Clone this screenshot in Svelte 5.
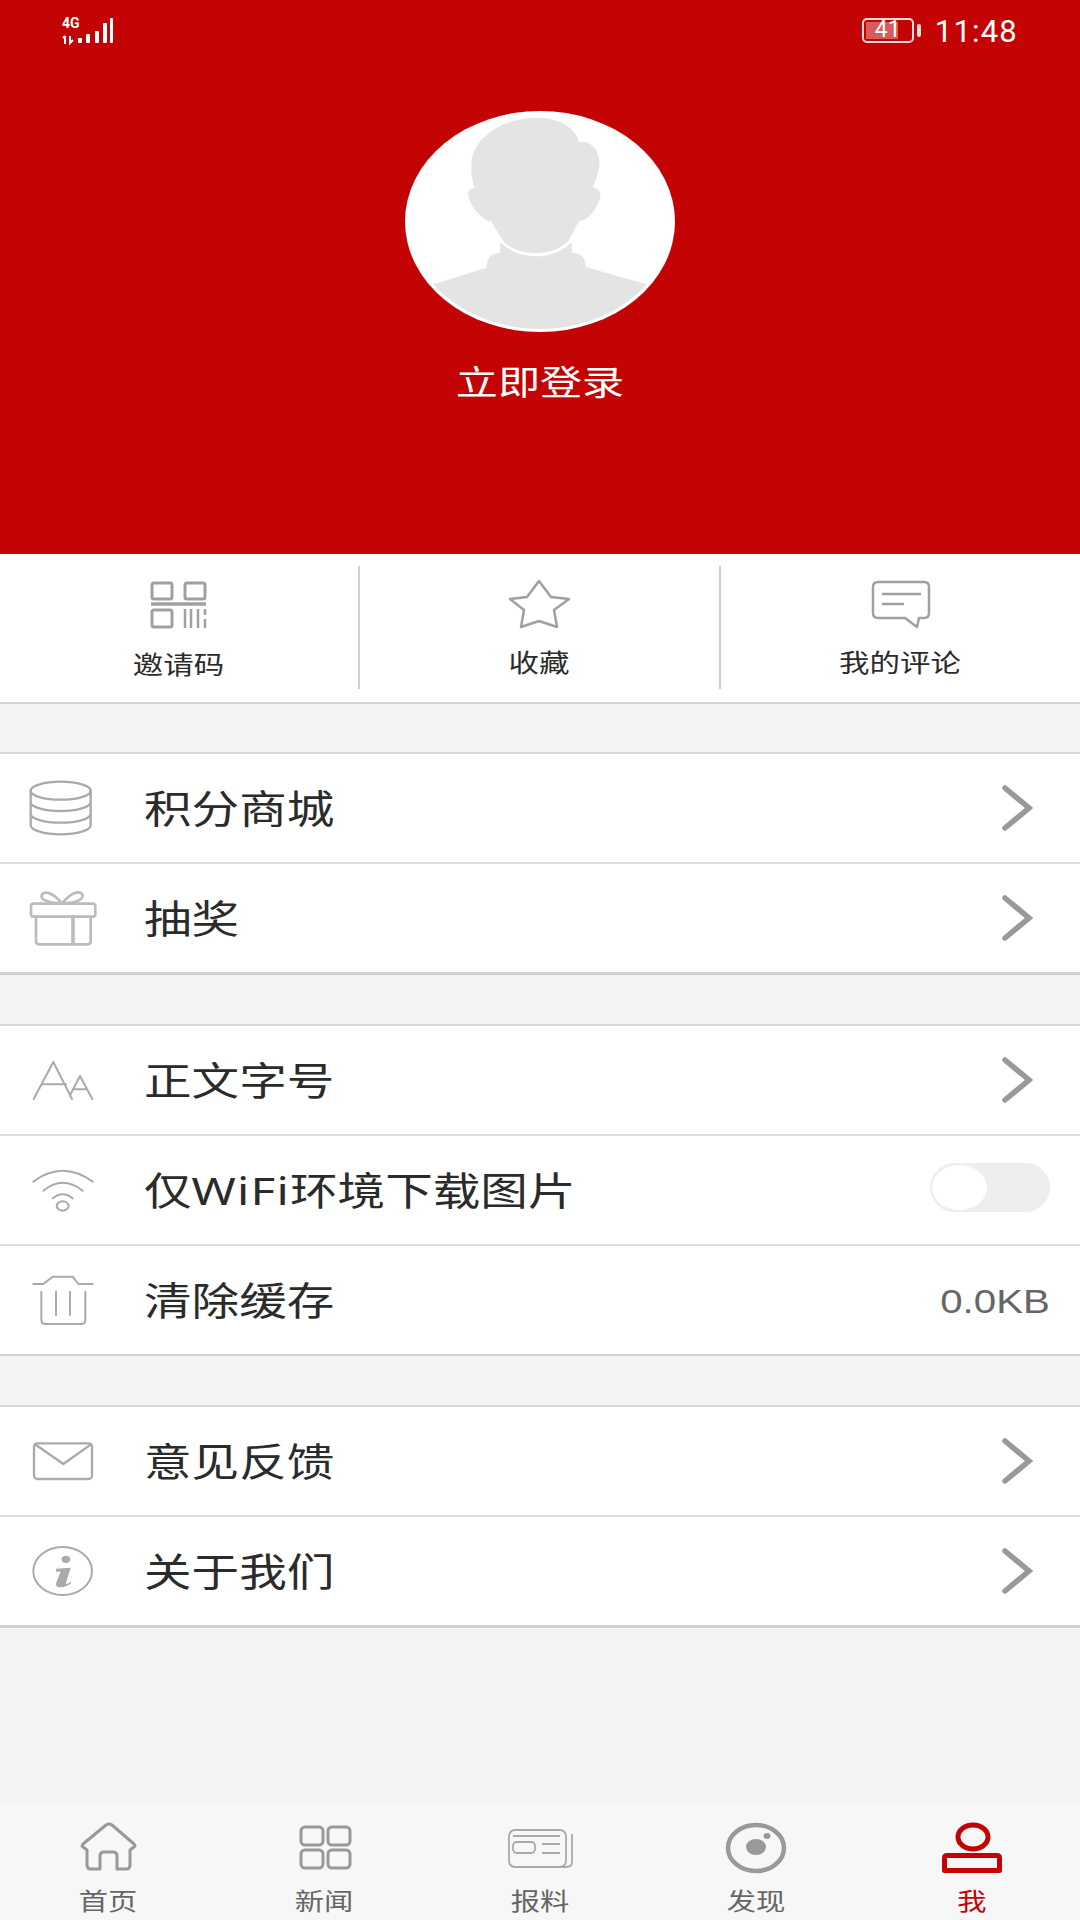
<script>
  const bottomTabs = ['首页', '新闻', '报料', '发现', '我']
</script>

{#snippet chevron()}
  <svg class="chevron" width="34" height="46" viewBox="0 0 34 46"><path d="M5 3 L29 23 L5 43" /></svg>
{/snippet}

<div class="page">
  <header class="header">
    <div class="status">
      <svg class="signal" width="60" height="30" viewBox="0 0 60 30">
        <text x="0" y="12" class="net">4G</text>
        <path class="arrows" d="M3 20 V28 M1 22 L3 20 M8 20 V27 L11 24" />
        <g class="bars">
          <rect x="16" y="22" width="4" height="5" rx="1" />
          <rect x="24" y="18" width="4" height="9" rx="1" />
          <rect x="33" y="15" width="4" height="12" rx="1" />
          <rect x="41" y="7" width="4" height="20" rx="1" />
          <rect x="48" y="2" width="3" height="25" rx="1" />
        </g>
      </svg>
      <div class="status-right">
        <div class="battery"><div class="battery-fill"></div><span>41</span></div>
        <div class="battery-nub"></div>
        <span class="time">11:48</span>
      </div>
    </div>

    <svg class="avatar" width="270" height="221" viewBox="75 62 810 663" preserveAspectRatio="none">
      <defs>
        <clipPath id="avatar-clip"><ellipse cx="480" cy="392" rx="396" ry="324" /></clipPath>
      </defs>
      <ellipse cx="480" cy="393.500" rx="405" ry="331.500" fill="#fff" />
      <g clip-path="url(#avatar-clip)" fill="#e4e4e4">
        <path d="M470 82 C540 82 590 115 596 155 C640 150 662 190 658 225 C655 255 645 275 638 292 C655 292 665 305 660 325 C650 355 625 390 598 393 C585 410 575 440 565 452 C540 478 505 488 470 488 C435 488 400 480 372 455 C360 440 345 410 333 393 C305 390 275 350 265 320 C262 300 272 292 284 295 C275 265 272 240 275 215 C280 140 370 82 470 82 Z" />
        <path d="M160 582 L320 532 C320 500 335 490 360 487 L360 455 C385 482 430 498 470 498 C510 498 550 482 575 455 L575 487 C600 487 617 500 617 530 L800 582 L800 730 L160 730 Z" />
      </g>
    </svg>
    <div class="login"><span class="wide">立即登录</span></div>
  </header>

  <nav class="shortcuts">
    <div class="shortcut">
      <svg width="80" height="52" viewBox="0 0 80 52">
        <rect x="13" y="4" width="20" height="16" rx="2" stroke-width="3" />
        <rect x="46" y="4" width="20" height="16" rx="2" stroke-width="3" />
        <path d="M12 25 H67" stroke-width="3.500" />
        <rect x="13" y="31" width="20" height="17" rx="2" stroke-width="3" />
        <path d="M46 30 V49 M52 30 V49 M59 30 V49 M66 30 V36 M66 40 V49" />
      </svg>
      <span class="wide first-label">邀请码</span>
    </div>
    <div class="shortcut">
      <svg width="80" height="52" viewBox="0 0 80 52">
        <path d="M39 2 L51 18 L69 20 L54 31 L57 48 L39 42 L21 48 L24 31 L10 20 L27 18 Z" />
      </svg>
      <span class="wide">收藏</span>
    </div>
    <div class="shortcut">
      <svg width="80" height="52" viewBox="0 0 80 52">
        <path d="M17 3 H63 Q68 3 68 8 V34 Q68 39 63 39 H58 L56 48 L44 39 H17 Q12 39 12 34 V8 Q12 3 17 3 Z" />
        <path d="M21 15 H60 M21 25 H43" />
      </svg>
      <span class="wide">我的评论</span>
    </div>
  </nav>

  <section class="group first">
    <div class="row">
      <svg class="row-icon" width="120" height="108" viewBox="0 42 360 324">
        <ellipse cx="182" cy="152" rx="90" ry="27" />
        <path d="M92 152 V256 A90 27 0 0 0 272 256 V152 M92 186 A90 27 0 0 0 272 186 M92 221 A90 27 0 0 0 272 221" />
      </svg>
      <span class="label wide">积分商城</span>
      {@render chevron()}
    </div>
    <div class="row">
      <svg class="row-icon light" width="120" height="108" viewBox="0 372 360 324">
        <rect x="93" y="491" width="193" height="39" rx="8" />
        <path d="M108 530 V604 Q108 613 117 613 H263 Q272 613 272 604 V530" />
        <path d="M219 530 V612" stroke-width="11" />
        <path d="M186 490 C160 460 135 450 125 465 C120 480 150 490 186 490 C215 455 240 450 248 465 C250 480 225 490 186 490" />
      </svg>
      <span class="label wide">抽奖</span>
      {@render chevron()}
    </div>
  </section>

  <section class="group">
    <div class="row">
      <svg class="row-icon thin" width="120" height="108" viewBox="0 18 360 324">
        <path d="M101 237 L160 126 L216 237 M125 193 H198 M210 226 L240 168 L277 237 M218 208 H262" />
      </svg>
      <span class="label wide">正文字号</span>
      {@render chevron()}
    </div>
    <div class="row">
      <svg class="row-icon thin" width="120" height="108" viewBox="0 348 360 324">
        <path d="M100 485 Q188 420 278 485 M130 512 Q188 465 248 512 M158 535 Q188 510 218 535" />
        <ellipse cx="188" cy="558" rx="18" ry="14" />
      </svg>
      <span class="label wide">仅<span class="latin">WiFi</span>环境下载图片</span>
      <div class="toggle"><div class="thumb"></div></div>
    </div>
    <div class="row">
      <svg class="row-icon thin" width="120" height="108" viewBox="0 678 360 324">
        <path d="M100 792 H130 L158 770 H218 L235 792 H278" />
        <path d="M124 815 V900 Q124 912 136 912 H244 Q256 912 256 900 V815 M168 815 V885 M210 815 V885" />
      </svg>
      <span class="label wide">清除缓存</span>
      <span class="size">0.0KB</span>
    </div>
  </section>

  <section class="group last">
    <div class="row">
      <svg class="row-icon" width="120" height="108" viewBox="0 21 360 324">
        <rect x="102" y="130" width="174" height="107" rx="10" />
        <path d="M105 133 L190 192 L273 133" />
      </svg>
      <span class="label wide">意见反馈</span>
      {@render chevron()}
    </div>
    <div class="row">
      <svg class="row-icon thin" width="120" height="108" viewBox="0 351 360 324">
        <ellipse cx="188" cy="513" rx="88" ry="72" />
        <ellipse class="solid" cx="198" cy="478" rx="13" ry="11" />
        <path class="solid" d="M168 506 L212 503 L198 548 Q196 556 212 546 L214 550 Q190 566 172 560 Q165 555 170 545 L182 515 L168 515 Z" />
      </svg>
      <span class="label wide">关于我们</span>
      {@render chevron()}
    </div>
  </section>

  <div class="spacer"></div>

  <footer class="tabbar">
    {#each bottomTabs as name, i}
      <div class="tab" class:active={i === 4}>
        <svg width="80" height="56" viewBox="0 0 80 56">
          {#if i === 0}
            <path d="M19 30 L15 27 Q13 26 15 24 L38 5 Q41 3 44 5 L66 24 Q68 26 66 27 L62 30 V45 Q62 49 58 49 H49 V36 Q49 32 45 32 H36 Q32 32 32 36 V49 H23 Q19 49 19 45 Z" />
          {:else if i === 1}
            <rect x="17" y="7" width="22" height="18" rx="4" />
            <rect x="44" y="7" width="22" height="18" rx="4" />
            <rect x="17" y="30" width="22" height="18" rx="4" />
            <rect x="44" y="30" width="22" height="18" rx="4" />
          {:else if i === 2}
            <g class="fine">
              <rect x="9" y="10" width="57" height="37" rx="6" />
              <path d="M72 14 V42 Q72 47 66 47 H58 M13 16 H60 M42 24 H60 M42 33 H60" />
              <rect x="13" y="22" width="22" height="11" rx="4" />
            </g>
          {:else if i === 3}
            <ellipse cx="40" cy="28" rx="28" ry="23" stroke-width="4.500" />
            <ellipse class="solid" cx="40" cy="27" rx="10" ry="8" />
            <ellipse class="solid" cx="51" cy="16" rx="3.500" ry="3" />
          {:else}
            <ellipse cx="41" cy="17" rx="15" ry="12" stroke-width="5" />
            <path d="M12.500 50.500 V38 Q12.500 35.500 15 35.500 H65 Q67.500 35.500 67.500 38 V50.500 Z" stroke-width="5" />
          {/if}
        </svg>
        <span class="wide">{name}</span>
      </div>
    {/each}
  </footer>
</div>

<style>
  :global(body) {
    margin: 0;
    background: #f3f3f3;
  }
  .page {
    width: 1080px;
    height: 1920px;
    display: flex;
    flex-direction: column;
    background: #f4f4f4;
    font-family: "Noto Sans", "Noto Sans CJK SC", sans-serif;
    overflow: hidden;
  }
  .wide {
    display: inline-block;
    transform: scaleX(1.22);
    white-space: nowrap;
  }

  .header {
    height: 554px;
    background: #c40404;
    display: flex;
    flex-direction: column;
    align-items: center;
    color: #fff;
  }
  .status {
    width: 100%;
    height: 50px;
    box-sizing: border-box;
    padding: 16px 62px 0 62px;
    display: flex;
    justify-content: space-between;
    align-items: flex-start;
  }
  .signal { fill: #fff; }
  .net {
    font-family: "Roboto", sans-serif;
    font-weight: 700;
    font-size: 14px;
  }
  .arrows {
    fill: none;
    stroke: #fff;
    stroke-width: 2;
  }
  .status-right {
    display: flex;
    align-items: flex-start;
    padding-top: 2px;
  }
  .battery {
    width: 52px;
    height: 25px;
    box-sizing: border-box;
    border: 2.5px solid #f6dcdc;
    border-radius: 5px;
    position: relative;
    font-family: "Roboto", sans-serif;
    font-size: 23px;
    line-height: 20px;
    text-align: center;
    color: #fff;
  }
  .battery span {
    position: relative;
  }
  .battery-fill {
    position: absolute;
    left: 2px;
    top: 2px;
    bottom: 2px;
    width: 32px;
    background: rgba(255, 255, 255, 0.35);
  }
  .battery-nub {
    width: 4px;
    height: 13px;
    margin: 6px 0 0 3px;
    background: #f6dcdc;
    border-radius: 2px;
  }
  .time {
    margin-left: 14px;
    font-family: "Roboto", sans-serif;
    font-size: 31px;
    line-height: 27px;
    letter-spacing: 1.2px;
  }
  .avatar { margin-top: 61px; }
  .login {
    margin-top: 30px;
    font-size: 34.500px;
    line-height: 40px;
  }

  .shortcuts {
    height: 150px;
    box-sizing: border-box;
    padding: 12px 0 13px;
    display: grid;
    grid-template-columns: 360px 361px 359px;
    background: #fff;
    border-bottom: 2px solid #d5d5d5;
  }
  .shortcut {
    box-sizing: border-box;
    padding-top: 13px;
    display: flex;
    flex-direction: column;
    align-items: center;
    border-right: 2px solid #cfcfcf;
    font-size: 25px;
    line-height: 30px;
    color: #2b2b2b;
  }
  .shortcut:last-child { border-right: none; }
  .shortcut svg {
    margin-bottom: 16px;
    fill: none;
    stroke: #a0a0a0;
    stroke-width: 2.5;
    stroke-linejoin: round;
  }
  .first-label { margin-top: 2px; }

  .group {
    margin-top: 49px;
    border-top: 2px solid #d8d8d8;
    background: #fff;
  }
  .group.first { margin-top: 48px; }
  .row {
    height: 110px;
    box-sizing: border-box;
    padding-right: 30px;
    display: flex;
    align-items: center;
    border-bottom: 2px solid #dedede;
  }
  .first .row:last-child, .last .row:last-child {
    height: 111px;
    border-bottom: 3px solid #d0d0d0;
  }
  .row:last-child { border-bottom-color: #d0d0d0; }
  .row-icon {
    flex: none;
    fill: none;
    stroke: #aaa;
    stroke-width: 7;
    stroke-linecap: round;
    stroke-linejoin: round;
  }
  .row-icon.thin { stroke-width: 6; }
  .row-icon.light { stroke: #bcbcbc; stroke-width: 8; }
  .row-icon .solid { fill: #aaa; stroke: none; }
  .label {
    flex: 1;
    margin-left: 24px;
    font-size: 39px;
    line-height: 50px;
    color: #2b2b2b;
    transform-origin: left center;
  }
  .latin { letter-spacing: 1px; }
  .chevron {
    margin-right: 16px;
    fill: none;
    stroke: #999;
    stroke-width: 5.5;
    stroke-linecap: round;
    stroke-linejoin: miter;
  }
  .toggle {
    width: 120px;
    height: 49px;
    margin-top: -5px;
    box-sizing: border-box;
    padding: 2px;
    background: #eee;
    border-radius: 25px;
  }
  .thumb {
    width: 55px;
    height: 45px;
    background: #fff;
    border-radius: 50%;
  }
  .size {
    margin-top: 3px;
    font-family: "Liberation Sans", sans-serif;
    font-size: 33px;
    color: #666;
    transform: scaleX(1.22);
    transform-origin: right center;
  }

  .spacer { flex: 1; }

  .tabbar {
    height: 118px;
    box-sizing: border-box;
    padding-top: 18px;
    display: flex;
    background: #f7f7f7;
  }
  .tab {
    flex: 1;
    display: flex;
    flex-direction: column;
    align-items: center;
    font-size: 24px;
    line-height: 30px;
    color: #666;
  }
  .tab svg {
    margin-bottom: 10px;
    fill: none;
    stroke: #999;
    stroke-width: 3;
    stroke-linejoin: round;
  }
  .tab .fine { stroke: #aaa; stroke-width: 1.8; }
  .tab .solid { fill: #999; stroke: none; }
  .tab.active { color: #c40404; }
  .tab.active svg { stroke: #c40404; }
</style>
